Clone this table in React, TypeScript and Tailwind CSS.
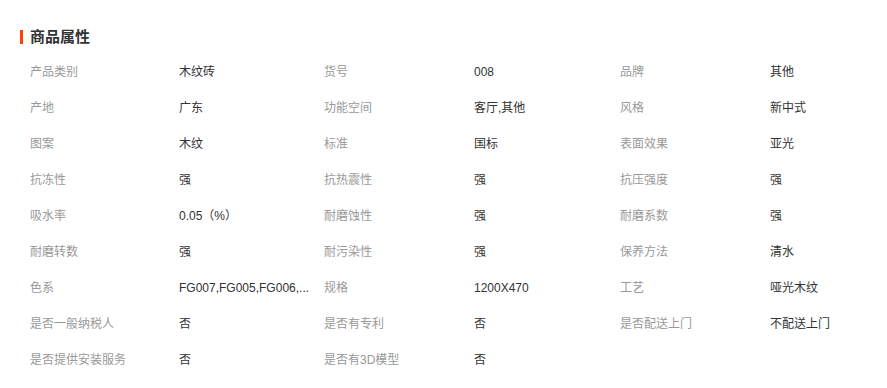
import React from "react";

const rows: [string, string][][] = [
  [["产品类别", "木纹砖"], ["货号", "008"], ["品牌", "其他"]],
  [["产地", "广东"], ["功能空间", "客厅,其他"], ["风格", "新中式"]],
  [["图案", "木纹"], ["标准", "国标"], ["表面效果", "亚光"]],
  [["抗冻性", "强"], ["抗热震性", "强"], ["抗压强度", "强"]],
  [["吸水率", "0.05（%）"], ["耐磨蚀性", "强"], ["耐磨系数", "强"]],
  [["耐磨转数", "强"], ["耐污染性", "强"], ["保养方法", "清水"]],
  [["色系", "FG007,FG005,FG006,..."], ["规格", "1200X470"], ["工艺", "哑光木纹"]],
  [["是否一般纳税人", "否"], ["是否有专利", "否"], ["是否配送上门", "不配送上门"]],
  [["是否提供安装服务", "否"], ["是否有3D模型", "否"]],
];

export default function App() {
  return (
    <div
      className="w-[887px] h-[388px] bg-white overflow-hidden"
      style={{ fontFamily: '"Liberation Sans", "Noto Sans CJK SC", sans-serif' }}
    >
      <div className="pt-[27px] pl-[20px] h-[47px] flex items-center gap-[7px]">
        <div className="w-[3px] h-[14px] bg-[#ff4400]" />
        <div className="text-[15px] font-bold text-[#333] leading-[20px]">商品属性</div>
      </div>
      <div className="mt-[7px] pl-[30px]">
        {rows.map((row, i) => (
          <div
            key={i}
            className="h-[36px] grid grid-cols-[149px_145px_150px_146px_150px_117px] items-center text-[12px]"
          >
            {row.map(([k, v], j) => (
              <React.Fragment key={j}>
                <div className="text-[#999] whitespace-nowrap">{k}</div>
                <div className="text-[#333] whitespace-nowrap">{v}</div>
              </React.Fragment>
            ))}
          </div>
        ))}
      </div>
    </div>
  );
}
